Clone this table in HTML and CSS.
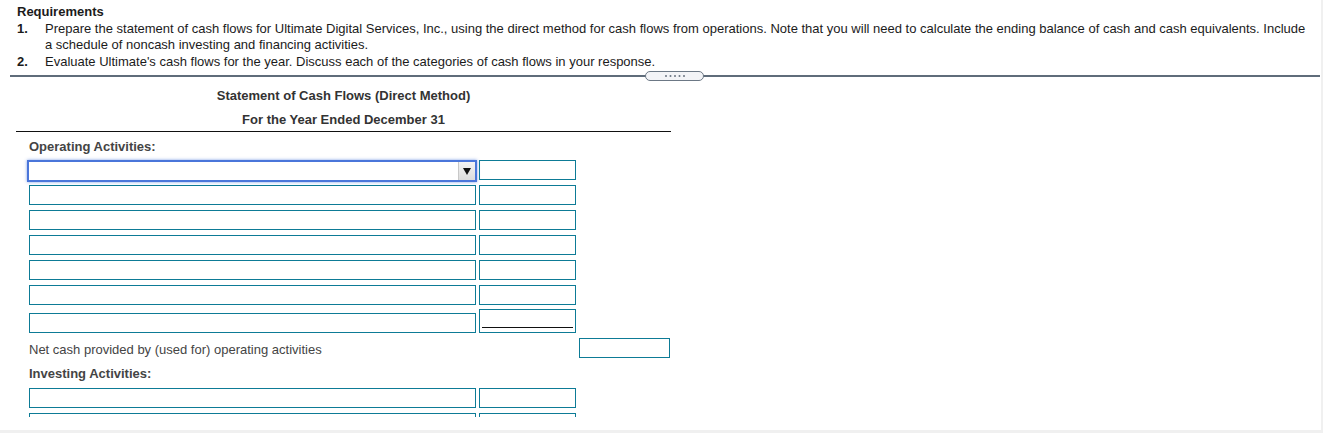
FILE: index.html
```html
<!DOCTYPE html>
<html lang="en">
<head>
<meta charset="utf-8">
<title>Statement of Cash Flows</title>
<link rel="stylesheet" href="styles.css">
</head>
<body>
<div class="page">
  <div class="reqs">
    <div class="reqs-title">Requirements</div>
    <div class="req">
      <span class="num">1.</span>
      <span class="txt">Prepare the statement of cash flows for Ultimate Digital Services, Inc., using the direct method for cash flows from operations. Note that you will need to calculate the ending balance of cash and cash equivalents. Include a schedule of noncash investing and financing activities.</span>
    </div>
    <div class="req">
      <span class="num">2.</span>
      <span class="txt">Evaluate Ultimate's cash flows for the year. Discuss each of the categories of cash flows in your response.</span>
    </div>
  </div>
  <div class="divider">
    <div class="pill">
      <svg width="22" height="4" viewBox="0 0 22 4"><circle cx="2" cy="2" r="1" fill="#6b7582"/><circle cx="6.5" cy="2" r="1" fill="#6b7582"/><circle cx="11" cy="2" r="1" fill="#6b7582"/><circle cx="15.5" cy="2" r="1" fill="#6b7582"/><circle cx="20" cy="2" r="1" fill="#6b7582"/></svg>
    </div>
  </div>

  <div class="sheet">
    <div class="sheet-head">
      <div class="head-line">Statement of Cash Flows (Direct Method)</div>
      <div class="head-line second">For the Year Ended December 31</div>
    </div>

    <div class="section-label">Operating Activities:</div>

    <div class="row row-select">
      <div class="select">
        <span class="select-btn"><svg width="8" height="8" viewBox="0 0 8 8"><path d="M0 1 H8 L4 8 Z" fill="#111"/></svg></span>
      </div>
      <input class="in-amt" type="text">
    </div>
    <div class="row first-after-select"><input class="in-desc" type="text"><input class="in-amt" type="text"></div>
    <div class="row"><input class="in-desc" type="text"><input class="in-amt" type="text"></div>
    <div class="row"><input class="in-desc" type="text"><input class="in-amt" type="text"></div>
    <div class="row"><input class="in-desc" type="text"><input class="in-amt" type="text"></div>
    <div class="row"><input class="in-desc" type="text"><input class="in-amt" type="text"></div>
    <div class="row row-last">
      <input class="in-desc" type="text">
      <div class="in-amt tall"><span class="underline"></span></div>
    </div>

    <div class="row total-row">
      <span class="total-label">Net cash provided by (used for) operating activities</span>
      <input class="in-total" type="text">
    </div>

    <div class="section-label investing">Investing Activities:</div>
    <div class="row after-label"><input class="in-desc" type="text"><input class="in-amt" type="text"></div>
    <div class="row"><input class="in-desc" type="text"><input class="in-amt" type="text"></div>
  </div>
</div>
</body>
</html>
```

FILE: styles.css
```css
html, body {
  margin: 0;
  padding: 0;
}
body {
  background: #f0f0f0;
  font-family: "Liberation Sans", Arial, sans-serif;
  font-size: 13px;
}
.page {
  width: 1321px;
  height: 430px;
  background: #fff;
  overflow: hidden;
}
.reqs {
  padding: 4px 0 0 17px;
  color: #1b1b1b;
  line-height: 16.5px;
}
.reqs-title {
  font-weight: bold;
}
.req {
  display: flex;
}
.req .num {
  width: 28px;
  flex: none;
  font-weight: bold;
}
.req .txt {
  width: 1265px;
}
.divider {
  position: relative;
  margin: 5px 0 0 10px;
  width: 1310px;
  height: 2px;
  background: #5f6c7a;
}
.pill {
  position: absolute;
  left: 635px;
  top: -4px;
  width: 59px;
  height: 10px;
  box-sizing: border-box;
  border: 1px solid #6c7885;
  border-radius: 6px;
  background: #f3f4f7;
  display: flex;
  align-items: center;
  justify-content: center;
}
.pill svg {
  display: block;
}
.sheet {
  margin-left: 16px;
  width: 655px;
  height: 340px;
  overflow: hidden;
  color: #444;
}
.sheet-head {
  margin-top: 7px;
  border-bottom: 1px solid #111;
  text-align: center;
  font-weight: bold;
  color: #333;
}
.head-line {
  line-height: 24px;
}
.head-line.second {
  line-height: 23px;
}
.section-label {
  margin-top: 4px;
  padding-left: 13px;
  line-height: 21px;
  font-weight: bold;
  color: #444;
}
.section-label.investing {
  margin-top: 3px;
}
.row {
  display: flex;
  gap: 3px;
  padding-left: 13px;
  margin-top: 5px;
  align-items: flex-start;
}
.row-select {
  margin-top: 3px;
  padding-left: 11px;
  gap: 2px;
}
.first-after-select {
  margin-top: 3px;
}
.row-last {
  margin-top: 4px;
  align-items: flex-end;
}
.after-label {
  margin-top: 4px;
}
input {
  margin: 0;
  padding: 0;
  font: inherit;
  outline: none;
  background: #fff;
}
.in-desc, .in-amt, .in-total {
  display: block;
  box-sizing: border-box;
  height: 20px;
  border: 1px solid #0d7b96;
  border-radius: 0;
}
.in-desc {
  width: 447px;
}
.in-amt {
  width: 97px;
}
.in-amt.tall {
  position: relative;
  height: 24px;
  background: #fff;
}
.underline {
  position: absolute;
  left: 2px;
  right: 2px;
  top: 17px;
  height: 1px;
  border-top: 1.5px solid #111;
}
.select {
  position: relative;
  box-sizing: border-box;
  width: 450px;
  height: 22px;
  border: 2px solid #4a76da;
  box-shadow: 0 0 3px rgba(74, 118, 218, 0.7);
  background: #fff;
}
.select-btn {
  position: absolute;
  right: 0;
  top: 0;
  bottom: 0;
  width: 16px;
  background: linear-gradient(#f4f4f4, #dcdcdc);
  border-left: 1px solid #c8c8c8;
  display: flex;
  align-items: center;
  justify-content: center;
}
.select-btn svg {
  display: block;
}
.total-row {
  margin-top: 5px;
  align-items: flex-start;
  gap: 0;
}
.total-label {
  flex: 1;
  padding-top: 2px;
  line-height: 20px;
  color: #444;
}
.in-total {
  width: 91px;
  margin-right: 1px;
}
```
